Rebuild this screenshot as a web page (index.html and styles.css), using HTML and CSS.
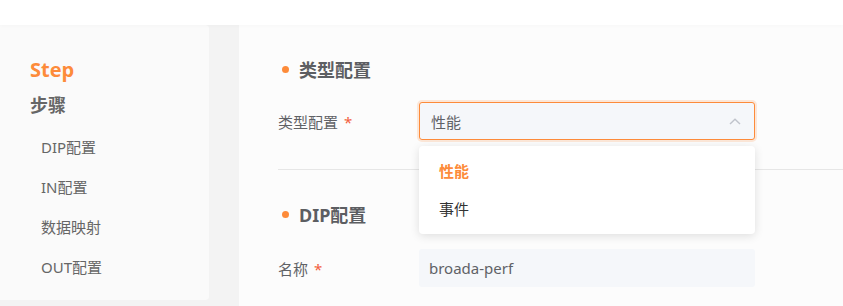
FILE: index.html
```html
<!DOCTYPE html>
<html lang="zh">
<head>
<meta charset="utf-8">
<title>配置</title>
<link rel="stylesheet" href="styles.css">
</head>
<body>
<div class="topbar"></div>
<div class="layout">
  <aside class="sidebar">
    <div class="step-en">Step</div>
    <div class="step-zh">步骤</div>
    <ul class="menu">
      <li>DIP配置</li>
      <li>IN配置</li>
      <li>数据映射</li>
      <li>OUT配置</li>
    </ul>
  </aside>
  <main class="panel">
    <div class="section-title"><span class="dot"></span>类型配置</div>
    <div class="form-row">
      <label class="label">类型配置<span class="req">*</span></label>
      <div class="select-wrap">
        <div class="select is-focus">
          <span class="select-text">性能</span>
          <svg class="chev" width="12" height="7" viewBox="0 0 12 7"><polyline points="1,6 6,1.2 11,6" fill="none" stroke="#c0c4cc" stroke-width="1.4"/></svg>
        </div>
        <ul class="dropdown">
          <li class="opt active">性能</li>
          <li class="opt">事件</li>
        </ul>
      </div>
    </div>
    <div class="divider"></div>
    <div class="section-title second"><span class="dot"></span>DIP配置</div>
    <div class="form-row row2">
      <label class="label">名称<span class="req">*</span></label>
      <div class="input">broada-perf</div>
    </div>
  </main>
</div>
</body>
</html>
```

FILE: styles.css
```css
* { box-sizing: border-box; }
html, body { margin: 0; padding: 0; }
body {
  width: 843px;
  height: 306px;
  overflow: hidden;
  background: #f3f3f3;
  font-family: "Noto Sans", "Noto Sans CJK SC", sans-serif;
  color: #606266;
}
.topbar {
  height: 25px;
  background: #ffffff;
  box-shadow: 0 1px 4px rgba(0,0,0,0.025);
  position: relative;
  z-index: 1;
}
.layout {
  display: flex;
  align-items: flex-start;
  gap: 30px;
  height: 281px;
}
.sidebar {
  width: 209px;
  height: 275px;
  background: #fafafa;
  border-radius: 0 4px 4px 0;
  padding: 32px 0 0 30px;
  flex-shrink: 0;
}
.step-en {
  font-size: 20px;
  font-weight: 700;
  line-height: 26px;
  color: #fd8b3a;
  font-family: "Open Sans", "Noto Sans", sans-serif;
}
.step-zh {
  font-size: 18px;
  font-weight: 700;
  line-height: 26px;
  margin-top: 9px;
  color: #666666;
}
.menu {
  list-style: none;
  margin: 9px 0 0 0;
  padding: 0 0 0 11px;
}
.menu li {
  height: 40px;
  line-height: 40px;
  font-size: 15px;
  color: #666666;
}
.panel {
  flex: 1;
  height: 281px;
  background: #fcfcfc;
  padding: 30px 0 0 39px;
}
.section-title {
  display: flex;
  align-items: center;
  height: 28px;
  font-size: 18px;
  font-weight: 700;
  color: #5c5e62;
}
.section-title.second { margin-top: 30px; }
.dot {
  width: 7px;
  height: 7px;
  border-radius: 50%;
  background: #fd8b3a;
  margin: 0 10px 0 4px;
}
.form-row {
  display: flex;
  align-items: center;
  margin-top: 19px;
}
.form-row.row2 { margin-top: 21px; }
.label {
  width: 141px;
  font-size: 15px;
  color: #606266;
}
.req {
  color: #f2603c;
  margin-left: 6px;
}
.select-wrap {
  position: relative;
  width: 336px;
}
.select {
  height: 38px;
  border: 1px solid #fd8b3a;
  border-radius: 3px;
  background: #f5f7fa;
  box-shadow: 0 0 0 2px rgba(253,139,58,0.18);
  display: flex;
  align-items: center;
  justify-content: space-between;
  padding: 0 13px 0 11px;
  font-size: 15px;
  color: #606266;
}
.chev { margin-top: 1px; }
.dropdown {
  position: absolute;
  left: 0;
  top: 44px;
  width: 336px;
  margin: 0;
  padding: 6px 0;
  list-style: none;
  background: #ffffff;
  border-radius: 4px;
  box-shadow: 0 2px 10px rgba(0,0,0,0.12);
  z-index: 5;
}
.opt {
  height: 38px;
  line-height: 38px;
  padding-left: 20px;
  font-size: 15px;
  color: #333333;
}
.opt.active {
  color: #fd8b3a;
  font-weight: 700;
}
.divider {
  height: 1px;
  background: #e6e6e6;
  margin-top: 29px;
}
.input {
  width: 336px;
  height: 38px;
  line-height: 38px;
  background: #f5f7fa;
  border-radius: 3px;
  padding-left: 10px;
  font-size: 15px;
  color: #606266;
}
```
